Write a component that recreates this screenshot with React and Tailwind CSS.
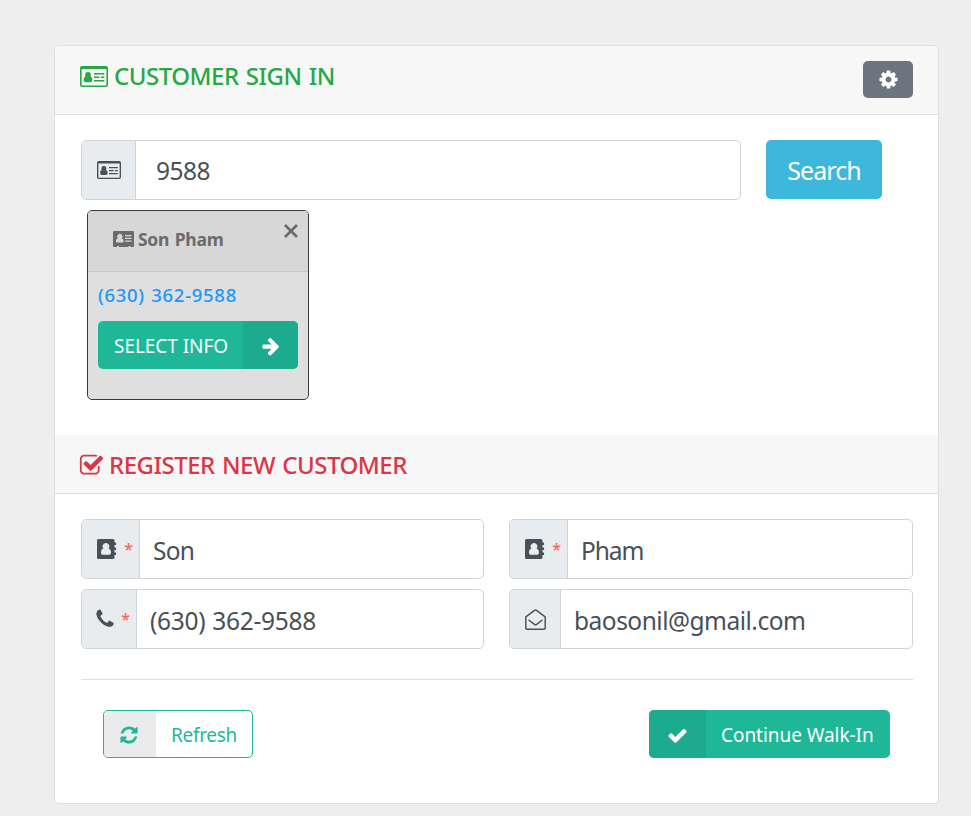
import React from "react";

const PATHS = {
  cog: "M1152 896q0-106-75-181t-181-75-181 75-75 181 75 181 181 75 181-75 75-181zm512-109v222q0 12-8 23t-20 13l-185 28q-19 54-39 91 35 50 107 138 10 12 10 25t-9 23q-27 37-99 108t-94 71q-12 0-26-9l-138-108q-44 23-91 38-16 136-29 186-7 28-36 28h-222q-14 0-24.5-8.5t-11.5-21.5l-28-184q-49-16-90-37l-141 107q-10 9-25 9-14 0-25-11-126-114-165-168-7-10-7-23 0-12 8-23 15-21 51-66.5t54-70.5q-27-50-41-99l-183-27q-13-2-21-12.5t-8-23.5v-222q0-12 8-23t19-13l186-28q14-46 39-92-40-57-107-138-10-12-10-24 0-10 9-23 26-36 98.5-107.5t94.5-71.5q13 0 26 10l138 107q44-23 91-38 16-136 29-186 7-28 36-28h222q14 0 24.5 8.5t11.5 21.5l28 184q49 16 90 37l142-107q9-9 24-9 13 0 25 10 129 119 165 170 7 8 7 22 0 12-8 23-15 21-51 66.5t-54 70.5q26 50 41 98l183 28q13 2 21 12.5t8 23.5z",
  check: "M1671 566q0 40-28 68l-724 724-136 136q-28 28-68 28t-68-28l-136-136-362-362q-28-28-28-68t28-68l136-136q28-28 68-28t68 28l294 295 656-657q28-28 68-28t68 28l136 136q28 28 28 68z",
  refresh: "M1639 1056q0 5-1 7-64 268-268 434.5t-478 166.5q-146 0-282.5-55t-243.5-157l-129 129q-19 19-45 19t-45-19-19-45v-448q0-26 19-45t45-19h448q26 0 45 19t19 45-19 45l-137 137q71 66 161 102t187 36q134 0 250-65t186-179q11-17 53-117 8-23 30-23h192q13 0 22.5 9.5t9.5 22.5zm25-800v448q0 26-19 45t-45 19h-448q-26 0-45-19t-19-45 19-45l138-138q-148-137-349-137-134 0-250 65t-186 179q-11 17-53 117-8 23-30 23h-199q-13 0-22.5-9.5t-9.5-22.5v-7q65-268 270-434.5t480-166.5q146 0 284 55.5t245 156.5l130-129q19-19 45-19t45 19 19 45z",
  arrow: "M1600 960q0 54-37 91l-651 651q-39 37-91 37-51 0-90-37l-75-75q-38-38-38-91t38-91l293-293h-704q-52 0-84.5-37.5t-32.5-90.5v-128q0-53 32.5-90.5t84.5-37.5h704l-293-294q-38-36-38-90t38-90l75-75q38-38 90-38 53 0 91 38l651 651q37 35 37 90z",
  checkSquare: "M1472 930v318q0 119-84.5 203.5t-203.5 84.5h-832q-119 0-203.5-84.5t-84.5-203.5v-832q0-119 84.5-203.5t203.5-84.5h832q63 0 117 25 15 7 18 23 3 17-9 29l-49 49q-10 10-23 10-3 0-9-2-23-6-45-6h-832q-66 0-113 47t-47 113v832q0 66 47 113t113 47h832q66 0 113-47t47-113v-254q0-13 9-22l64-64q10-10 23-10 6 0 12 3 20 8 20 29zm231-489l-814 814q-24 24-57 24t-57-24l-430-430q-24-24-24-57t24-57l110-110q24-24 57-24t57 24l263 263 647-647q24-24 57-24t57 24l110 110q24 24 24 57t-24 57z",
  phone: "M1600 1240q0 27-10 70.5t-21 68.5q-21 50-122 106-94 51-186 51-27 0-52.5-3.5t-57.5-12.5-47.5-14.5-55.5-20.5-49-18q-98-35-175-83-128-79-264.5-215.5t-215.5-264.5q-48-77-83-175-3-9-18-49t-20.5-55.5-14.5-47.5-12.5-57.5-3.5-52.5q0-92 51-186 56-101 106-122 25-11 68.5-21t70.5-10q14 0 21 3 18 6 53 76 11 19 30 54t35 63.5 31 53.5q3 4 17.5 25t21.5 35.5 7 28.5q0 20-28.5 50t-62 55-62 53-28.5 46q0 9 5 22.5t8.5 20.5 14 24 11.5 19q76 137 174 235t235 174q2 1 19 11.5t24 14 20.5 8.5 22.5 5q18 0 46-28.5t53-62 55-62 50-28.5q14 0 28.5 7t35.5 21.5 25 17.5q25 15 53.5 31t63.5 35 54 30q70 35 76 53 3 7 3 21z",
};

function Icon({ name, className }) {
  return (
    <svg viewBox="0 0 1792 1792" fill="currentColor" className={`shrink-0 ${className}`}>
      <path d={PATHS[name]} />
    </svg>
  );
}

function IdCardOutline({ className }) {
  return (
    <svg viewBox="0 0 28 21" fill="currentColor" className={`shrink-0 ${className}`}>
      <path fillRule="evenodd" d="M2 0h24a2 2 0 0 1 2 2v17a2 2 0 0 1-2 2H2a2 2 0 0 1-2-2V2a2 2 0 0 1 2-2zM1.600 3v15.900a.5.5 0 0 0 .5.5h23.8a.5.5 0 0 0 .5-.5V3z" />
      <circle cx="8" cy="8.800" r="2.900" />
      <path d="M5.800 10.200q2.200 2.200 4.400 0 2.200.5 2.200 3.600 0 2.400-1.800 2.400H5.400q-1.800 0-1.800-2.400 0-3.100 2.200-3.600z" />
      <path d="M14 7h10.300v1.400H14zM14 10.500h5.600v1.400H14zM21 10.500h3.300v1.400H21zM14 14h10.300v1.400H14z" />
    </svg>
  );
}

function IdCardSolid({ className }) {
  return (
    <svg viewBox="0 0 21 16" fill="currentColor" className={`shrink-0 ${className}`}>
      <path fillRule="evenodd" d="M1.300 0h18.400A1.300 1.300 0 0 1 21 1.300v13.400a1.300 1.300 0 0 1-1.300 1.300H17.500v-1h-2v1H6v-1H4v1H1.300A1.300 1.300 0 0 1 0 14.700V1.300A1.300 1.300 0 0 1 1.300 0zM4.700 7.400C3.200 7.700 3 9 3 10.200c0 .9.400 1.400 1.200 1.400h5.200c.8 0 1.200-.5 1.200-1.400 0-1.200-.2-2.500-1.700-2.800a2.700 2.700 0 1 0-4.200 0zM12 4v1.300h6.500V4zM12 6.700V8h6.500V6.700zM12 9.400v1.300h6.500V9.400z" />
    </svg>
  );
}

function AddressBook({ className }) {
  return (
    <svg viewBox="0 0 20 20" fill="currentColor" className={`shrink-0 ${className}`}>
      <path fillRule="evenodd" d="M1.500 0h14.500a1.500 1.500 0 0 1 1.500 1.500v17a1.500 1.500 0 0 1-1.500 1.500H1.500A1.500 1.500 0 0 1 0 18.500v-17A1.500 1.500 0 0 1 1.500 0zM6.500 9.600C4.500 10 4 12 4 13.800c0 1.200.6 2 1.700 2h6.500c1.100 0 1.700-.8 1.700-2 0-1.800-.5-3.800-2.500-4.200a3.300 3.300 0 1 0-4.900 0z" />
      <path d="M17 3.500h1.600q.5 0 .5.500v1.500q0 .5-.5.500H17zM17 8.500h1.600q.5 0 .5.500v1.500q0 .5-.5.500H17zM17 13.500h1.600q.5 0 .5.500v1.500q0 .5-.5.500H17z" />
    </svg>
  );
}

function EnvelopeOpen({ className }) {
  return (
    <svg viewBox="0 0 21 21" fill="none" stroke="currentColor" strokeWidth="1.450" strokeLinejoin="round" strokeLinecap="round" className={`shrink-0 ${className}`}>
      <path d="M.8 7.800L9.500 1.300Q10.500.6 11.500 1.300L20.200 7.800V19q0 1.200-1.200 1.200H2Q.8 20.200.8 19z" />
      <path d="M4 11.200l5.400 4.200q1.100.8 2.200 0l5.400-4.200" />
    </svg>
  );
}

function Field({ addonClass, icon, required, value, inputClass, textClass }) {
  return (
    <div className="flex h-[60px] min-w-0 overflow-hidden rounded-[5px] border border-[#ced4da] bg-white">
      <div className={`flex shrink-0 items-center border-r border-[#ced4da] bg-[#e9ecef] pl-[15px] text-[#495057] ${addonClass}`}>
        {icon}
        {required && <span className="ml-auto mr-[6px] text-[16px] font-medium leading-none text-[#ff6258]">*</span>}
      </div>
      <div className={`flex flex-1 items-center text-[24.500px] leading-none text-[#495057] ${inputClass}`}>
        <span className={`whitespace-pre ${textClass}`}>{value}</span>
      </div>
    </div>
  );
}

export default function App() {
  return (
    <div className="h-[816px] w-[971px] overflow-hidden bg-[#eeeeee] pl-[54px] pt-[45px] font-['Noto_Sans','Open_Sans',sans-serif]">
      <main className="h-[759px] w-[885px] overflow-hidden rounded-[5px] border border-[#dfdfdf] bg-white">
        <header className="flex h-[69px] items-start justify-between border-b border-[#dfdfdf] bg-[#f7f7f7] pl-[25px] pr-[25px]">
          <h4 className="flex pt-[20px] text-[#28a745]">
            <IdCardOutline className="h-[21px] w-[28px]" />
            <span className="ml-[6px] whitespace-pre text-[24px] font-medium leading-[20px] tracking-[-0.500px] [word-spacing:1.500px]">CUSTOMER SIGN IN</span>
          </h4>
          <button className="mt-[15px] flex h-[37px] w-[50px] items-center justify-center rounded-[5px] bg-[#6c757d] text-white">
            <Icon name="cog" className="h-[21px] w-[21px]" />
          </button>
        </header>

        <section className="h-[320px] pl-[26px] pt-[25px]">
          <div className="flex gap-[25px]">
            <div className="w-[660px]">
              <Field addonClass="w-[54px]" icon={<IdCardOutline className="h-[18px] w-[24px]" />} value="9588" inputClass="pl-[20px] pt-[2px]" textClass="tracking-[-0.500px]" />
            </div>
            <button className="flex h-[59px] w-[116px] items-center justify-center rounded-[5px] bg-[#3eb7dc] pt-[2px] text-[25px] leading-none tracking-[-0.900px] text-white">Search</button>
          </div>

          <article className="ml-[6px] mt-[10px] h-[190px] w-[222px] overflow-hidden rounded-[5px] border border-[#343a40] bg-[#dfdfdf]">
            <div className="flex h-[61px] items-start justify-between border-b border-[#c9c9c9] bg-[#d7d7d7] pl-[25px] pr-[10px] text-[#6b6b6b]">
              <div className="flex items-center pt-[20px]">
                <IdCardSolid className="h-[16px] w-[21px]" />
                <span className="ml-[4px] whitespace-pre text-[17.500px] font-bold leading-[16px] tracking-[-0.300px] [word-spacing:1.500px]">Son Pham</span>
              </div>
              <svg viewBox="0 0 14 14" className="mt-[13px] h-[14px] w-[14px]" stroke="currentColor" strokeWidth="2.600" fill="none">
                <path d="M1 1L13 13M13 1L1 13" />
              </svg>
            </div>
            <div className="px-[10px] pt-[13px]">
              <a className="block whitespace-pre text-[18.500px] font-medium leading-[20px] tracking-[0.700px] [word-spacing:1px] text-[#1e96f8]">(630) 362-9588</a>
              <button className="mt-[16px] flex h-[48px] w-[200px] overflow-hidden rounded-[5px] bg-[#1eb899] text-white">
                <span className="flex h-full w-[145px] items-center pl-[16px] pt-[2px] text-[19px] leading-none tracking-[-0.050px] whitespace-pre">SELECT INFO</span>
                <span className="flex h-full flex-1 items-center justify-center bg-[#1dab8f] pt-[2px]">
                  <Icon name="arrow" className="h-[20px] w-[20px]" />
                </span>
              </button>
            </div>
          </article>
        </section>

        <header className="flex h-[59px] items-start border-b border-[#dfdfdf] bg-[#f7f7f7] pl-[24px]">
          <h4 className="flex pt-[20px] text-[#dc3545]">
            <Icon name="checkSquare" className="mt-[-2px] h-[25px] w-[25px]" />
            <span className="ml-[5px] whitespace-pre text-[24px] font-medium leading-[20px] tracking-[-0.500px] [word-spacing:1.500px]">REGISTER NEW CUSTOMER</span>
          </h4>
        </header>

        <section className="px-[26px] pt-[25px]">
          <div className="grid w-[832px] grid-cols-[403px_404px] gap-x-[25px] gap-y-[10px]">
            <Field addonClass="w-[58px]" icon={<AddressBook className="h-[20px] w-[20px]" />} required value="Son" inputClass="pl-[13px] pt-[4px]" textClass="tracking-[-0.700px]" />
            <Field addonClass="w-[58px]" icon={<AddressBook className="h-[20px] w-[20px]" />} required value="Pham" inputClass="pl-[13px] pt-[4px]" textClass="tracking-[-1.100px]" />
            <Field addonClass="w-[55px]" icon={<Icon name="phone" className="ml-[-3px] h-[22px] w-[22px]" />} required value="(630) 362-9588" inputClass="pl-[13px] pt-[4px]" textClass="tracking-[-0.300px] [word-spacing:1px]" />
            <Field addonClass="w-[51px]" icon={<EnvelopeOpen className="h-[21px] w-[21px]" />} value="baosonil@gmail.com" inputClass="pl-[13px] pt-[4px]" textClass="tracking-[-0.500px]" />
          </div>
          <hr className="mt-[30px] w-[832px] border-[#dfdfdf]" />
          <div className="mt-[30px] flex w-[809px] justify-between pl-[22px]">
            <button className="flex h-[48px] w-[150px] overflow-hidden rounded-[5px] border border-[#1eb899] bg-white text-[#1eb899]">
              <span className="flex h-full w-[52px] items-center justify-center bg-[#e9ebec] pr-[2px] pt-[2px]">
                <Icon name="refresh" className="h-[20px] w-[20px]" />
              </span>
              <span className="flex h-full items-center whitespace-pre pl-[15px] pt-[3px] text-[19px] leading-none tracking-[-0.300px]">Refresh</span>
            </button>
            <button className="flex h-[48px] w-[241px] overflow-hidden rounded-[5px] bg-[#1eb899] text-white">
              <span className="flex h-full w-[57px] items-center justify-center bg-[#1dab8f] pr-[1px] pt-[2px]">
                <Icon name="check" className="h-[21px] w-[21px]" />
              </span>
              <span className="flex h-full items-center whitespace-pre pl-[15px] pt-[3px] text-[19px] leading-none tracking-[-0.050px]">Continue Walk-In</span>
            </button>
          </div>
        </section>
      </main>
    </div>
  );
}
